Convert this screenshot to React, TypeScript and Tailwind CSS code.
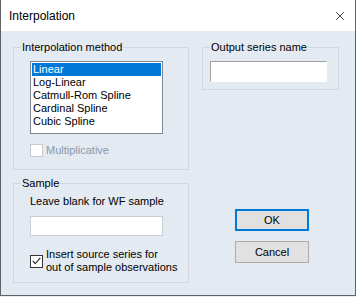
import { X } from 'lucide-react';

const LIST_ITEMS = ['Linear', 'Log-Linear', 'Catmull-Rom Spline', 'Cardinal Spline', 'Cubic Spline'];

const font = { fontFamily: '"Liberation Sans", Arial, sans-serif' };

function Group({
  label,
  className,
  bodyClass,
  children,
}: {
  label: string;
  className?: string;
  bodyClass?: string;
  children: React.ReactNode;
}) {
  return (
    <fieldset className={`border border-[#d3d8de] ${className ?? ''}`}>
      <legend className="ml-[7px] px-[1px] text-[11px] leading-[13px] text-black">{label}</legend>
      <div className={bodyClass}>{children}</div>
    </fieldset>
  );
}

function CheckBox({ checked, disabled }: { checked?: boolean; disabled?: boolean }) {
  return (
    <span
      className={`flex h-[13px] w-[13px] shrink-0 items-center justify-center border bg-white ${
        disabled ? 'border-[#c6cbd1]' : 'border-[#333]'
      }`}
    >
      {checked ? (
        <svg width="9" height="8" viewBox="0 0 9 8" fill="none">
          <path d="M0.8 4 L3.3 6.6 L8.3 0.8" stroke="#333" strokeWidth="1.2" />
        </svg>
      ) : null}
    </span>
  );
}

export default function App() {
  return (
    <div className="h-[297px] w-[356px] bg-[#e9edf2]" style={font}>
      <div className="flex h-[296px] w-[356px] flex-col border-x border-b border-[#5f6368]">
        <div className="flex h-[31px] shrink-0 items-center justify-between bg-white pl-[8px] pr-[8px]">
          <span className="text-[12px] text-black">Interpolation</span>
          <X className="h-[14px] w-[14px] text-black" strokeWidth={1.3} />
        </div>

        <div className="flex flex-1 bg-[#e4eaf2] pl-[12px] pt-[10px]">
          <div className="flex w-[176px] flex-col">
            <Group label="Interpolation method" className="h-[129px]" bodyClass="pl-[16px] pt-[7px]">
              <div className="h-[73px] w-[133px] border border-[#7f8790] bg-white p-[1px] text-[11px] leading-[13px] text-black">
                {LIST_ITEMS.map((item, i) => (
                  <div key={item} className={`pl-[1px] ${i === 0 ? 'bg-[#0078d7] text-white' : ''}`}>
                    {item}
                  </div>
                ))}
              </div>
              <label className="mt-[10px] flex items-center gap-[3px] text-[11px] leading-[13px] text-[#8b97a5]">
                <CheckBox disabled />
                Multiplicative
              </label>
            </Group>

            <Group label="Sample" className="mt-[7px] h-[106px]" bodyClass="pl-[16px]">
              <p className="mt-[5px] text-[11px] leading-[13px] text-black">Leave blank for WF sample</p>
              <input className="mt-[8px] block h-[20px] w-[133px] border border-[#c9ced4] bg-white" />
              <label className="mt-[12px] flex items-center gap-[3px] text-[11px] leading-[13px] text-black">
                <CheckBox checked />
                <span>
                  Insert source series for
                  <br />
                  out of sample observations
                </span>
              </label>
            </Group>
          </div>

          <div className="ml-[13px] flex w-[137px] flex-col">
            <Group label="Output series name" className="h-[49px]" bodyClass="pl-[7px]">
              <input className="mt-[7px] block h-[21px] w-[117px] border border-b-white border-l-[#a0a0a0] border-r-white border-t-[#a0a0a0] bg-white" />
            </Group>

            <button className="ml-[33px] mt-[119px] h-[22px] w-[74px] border-2 border-[#0078d7] bg-[#e1e1e1] text-[11px] text-black">
              OK
            </button>
            <button className="ml-[33px] mt-[10px] h-[22px] w-[74px] border border-[#adadad] bg-[#e1e1e1] text-[11px] text-black">
              Cancel
            </button>
          </div>
        </div>
      </div>
    </div>
  );
}
